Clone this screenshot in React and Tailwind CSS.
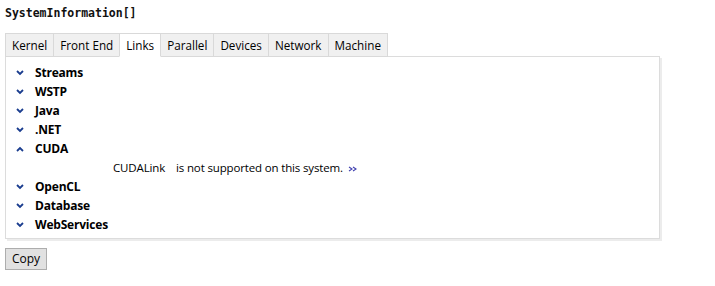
import React, { useState } from 'react';

const tabs = ['Kernel', 'Front End', 'Links', 'Parallel', 'Devices', 'Network', 'Machine'];
const sections = ['Streams', 'WSTP', 'Java', '.NET', 'CUDA', 'OpenCL', 'Database', 'WebServices'];

function Chevron({ open }) {
    return (
        <svg width="8" height="6" viewBox="0 0 8 6" className="shrink-0">
            {open ? (
                <path d="M1 5 L4 2 L7 5" fill="none" stroke="#1a3d8f" strokeWidth="1.8" />
            ) : (
                <path d="M1 1 L4 4 L7 1" fill="none" stroke="#1a3d8f" strokeWidth="1.8" />
            )}
        </svg>
    );
}

function MoreArrow() {
    return (
        <svg width="10" height="6" viewBox="0 0 10 6" className="ml-[5px] mt-[2px]">
            <path d="M1 1 L4 3 L1 5 M5 1 L8 3 L5 5" fill="none" stroke="#4040b0" strokeWidth="1.1" />
        </svg>
    );
}

function App() {
    const [active, setActive] = useState('Links');
    const [open, setOpen] = useState({ CUDA: true });

    return (
        <div className="min-h-screen w-full bg-white text-black px-[5px] pt-[6px]" style={{ fontFamily: '"Open Sans", "Noto Sans", sans-serif' }}>
            <div className="text-[11.5px] font-bold leading-[14px] text-[#111]" style={{ fontFamily: '"DejaVu Sans Mono", "Liberation Mono", monospace' }}>
                SystemInformation[]
            </div>
            <div className="flex mt-[13px] h-[24px]">
                {tabs.map(t => (
                    <button
                        key={t}
                        onClick={() => setActive(t)}
                        className={`h-[24px] px-[6px] text-[11.7px] leading-[22px] border border-[#d9d9d9] -ml-px first:ml-0 ${t === active ? 'bg-white border-b-white relative z-10' : 'bg-[#f0f0f0]'}`}
                    >
                        {t}
                    </button>
                ))}
            </div>
            <div className="-mt-px w-[655px] h-[183px] border border-[#dcdcdc] shadow-[2px_2px_0_#ececec] bg-white pt-[6px] pl-[10px]">
                {sections.map(s => (
                    <div key={s}>
                        <div className="flex items-center h-[19px] gap-[11px] cursor-pointer" onClick={() => setOpen({ ...open, [s]: !open[s] })}>
                            <Chevron open={open[s]} />
                            <span className="text-[12px] font-bold tracking-[-0.2px]">{s}</span>
                        </div>
                        {s === 'CUDA' && open[s] && (
                            <div className="h-[19px] flex items-center pl-[97px] text-[11.5px] tracking-[-0.15px]">
                                <span>CUDALink</span>
                                <span className="ml-[11px]">is not supported on this system.</span>
                                <MoreArrow />
                            </div>
                        )}
                    </div>
                ))}
            </div>
            <button className="mt-[9px] h-[22px] px-[6px] text-[12px] bg-[#e1e1e1] border border-[#adadad]">Copy</button>
        </div>
    );
}

export default App;
